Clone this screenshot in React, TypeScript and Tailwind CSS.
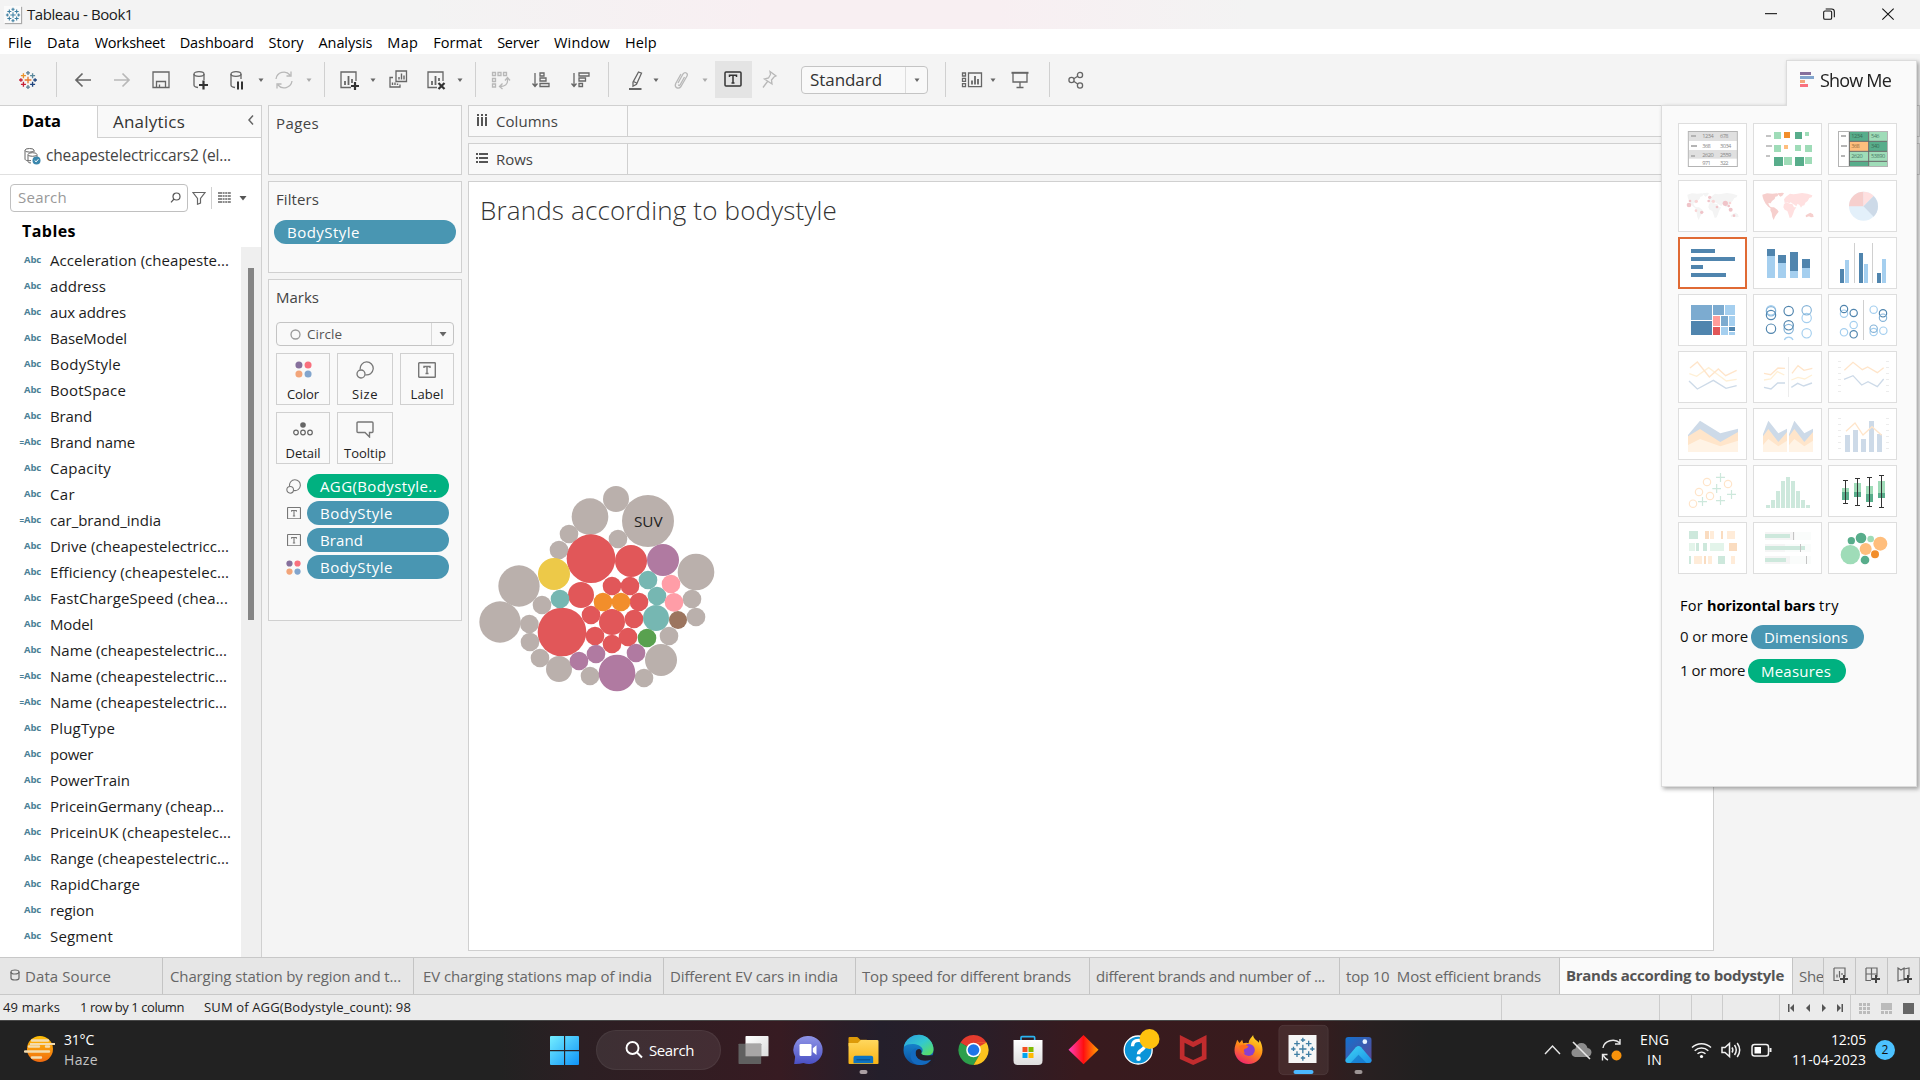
import { useLayoutEffect, useRef, useState } from "react";
import type { ReactNode } from "react";

/* Text run whose tracking is adjusted so that it spans exactly w pixels. */
function Fit({ w, children, className = "" }: { w: number; children: string; className?: string }) {
  const ref = useRef<HTMLSpanElement>(null);
  const [ls, setLs] = useState(0);
  useLayoutEffect(() => {
    if (ref.current) {
      const natural = ref.current.getBoundingClientRect().width;
      setLs((w + 1 - natural) / children.length);
    }
  }, []);
  return (
    <span ref={ref} className={`inline-block shrink-0 whitespace-pre ${className}`} style={{ letterSpacing: `${ls}px` }}>
      {children}
    </span>
  );
}

const PLUS = "M-1 0h2M0 -1v2";
function TableauMark({ size, colors }: { size: number; colors: string[] }) {
  const p: [number, number, number, number][] = [
    [12, 12, 4, 0], [12, 3.5, 2.4, 1], [12, 20.5, 2.4, 2], [3.5, 12, 2.2, 3], [20.5, 12, 2.2, 4],
    [6.5, 6.8, 3, 5], [17.5, 6.8, 3, 6], [6.5, 17.2, 3, 7], [17.5, 17.2, 3, 8],
  ];
  return (
    <svg width={size} height={size} viewBox="0 0 24 24">
      {p.map(([x, y, s, c], i) => (
        <path key={i} d={PLUS} transform={`translate(${x} ${y}) scale(${s})`} stroke={colors[c % colors.length]} strokeWidth={1.6 / s} fill="none" />
      ))}
    </svg>
  );
}
const BRAND = ["#e8762b", "#5c7f95", "#5c7f95", "#c72037", "#1f447e", "#eb9129", "#59879b", "#c72037", "#1f447e"];
const BLUE = ["#3b7ea1"];

function I({ className = "", light, children }: { className?: string; light?: boolean; children: ReactNode }) {
  return (
    <svg className={`shrink-0 ${className}`} width="24" height="24" viewBox="0 0 24 24" fill="none" stroke={light ? "#b8b8b8" : "#666"} strokeWidth="1.3">
      {children}
    </svg>
  );
}
function Caret({ className = "", light }: { className?: string; light?: boolean }) {
  return (
    <svg className={`shrink-0 ${className}`} width="8" height="8" viewBox="0 0 8 8">
      <path d="M1.5 2.5h5L4 6z" fill={light ? "#aaa" : "#666"} />
    </svg>
  );
}
function Sep({ className = "" }: { className?: string }) {
  return <div className={`h-[35px] w-px shrink-0 bg-[#d0d0d0] ${className}`} />;
}

function TitleBar() {
  return (
    <header className="flex h-[29px] shrink-0 items-center bg-[linear-gradient(90deg,#f3f3f3_22%,#f8eff2_40%,#f8eff2_52%,#f3f3f3_65%)] pl-1 text-[15px] text-[#1a1a1a]">
      <div className="flex h-[17px] w-[17px] items-center justify-center bg-[#fafafa] shadow-[1px_1px_1px_#aaa]">
        <TableauMark size={16} colors={BLUE} />
      </div>
      <Fit w={105} className="ml-[6px]">Tableau - Book1</Fit>
      <svg className="ml-auto" width="160" height="29" viewBox="0 0 480 87" fill="none" stroke="#111" strokeWidth="3.2">
        <path d="M15 41h36" />
        <rect x="191" y="33" width="24" height="25" rx="4" />
        <path d="M197 27h18q8 0 8 8v17" />
        <path d="M367 26l34 33M401 26l-34 33" />
      </svg>
    </header>
  );
}

const MENUS: [string, number][] = [
  ["File", 23], ["Data", 32], ["Worksheet", 69], ["Dashboard", 73], ["Story", 34], ["Analysis", 53],
  ["Map", 30], ["Format", 48], ["Server", 41], ["Window", 55], ["Help", 31],
];
function MenuBar() {
  return (
    <nav className="flex h-[25px] shrink-0 items-center gap-[14.900px] bg-white pl-2 pt-[2px] text-[14.500px] text-black">
      {MENUS.map(([m, w]) => <Fit key={m} w={w}>{m}</Fit>)}
    </nav>
  );
}

function Toolbar() {
  return (
    <div className="flex h-[51px] shrink-0 items-center bg-[#f4f4f4]">
      <div className="ml-[18px] mr-px"><TableauMark size={20} colors={BRAND} /></div>
      <Sep className="ml-[17px]" />
      <I className="ml-[14px]"><path d="M20 12H5M11.500 5.500L5 12l6.500 6.500" strokeWidth="1.700" /></I>
      <I light className="ml-[15px]"><path d="M4 12h15M12.500 5.500L19 12l-6.500 6.500" strokeWidth="1.700" /></I>
      <I className="ml-[15px]"><path d="M4 4h16v15.500H4zM7.500 19.500v-6h9v6M10.500 19.500v-3" /></I>
      <I className="ml-[15px]">
        <ellipse cx="11" cy="6" rx="5" ry="2.300" /><path d="M6 6v11q0 2 4 2.500M16 6v6" /><path d="M15.500 12.500v9M11 17h9" stroke="#333" strokeWidth="2.200" />
      </I>
      <I className="ml-[13px]">
        <ellipse cx="11" cy="6" rx="5" ry="2.300" /><path d="M6 6v11q0 2 4 2.500M16 6v5" /><path d="M13 13.500v8M17 13.500v8" stroke="#333" strokeWidth="2" />
      </I>
      <Caret className="ml-[8px]" />
      <I light className="ml-[7px]"><path d="M4 11a8 8 0 0 1 14-4M20 13a8 8 0 0 1-14 4M19 3.500v4.500h-4.500M5 20.500V16h4.500" /></I>
      <Caret light className="ml-[9px]" />
      <Sep className="ml-[11px]" />
      <I className="ml-[12px]">
        <path d="M14 19.500H4V4h15v9" /><path d="M8 17v-4M11.500 17V8M15 15v-4" strokeWidth="1.800" /><path d="M18 14v8M14 18h8" stroke="#333" strokeWidth="2.200" />
      </I>
      <Caret className="ml-[8px]" />
      <I className="ml-[9px]">
        <path d="M10 3h10.500v10.500H10zM7 9.500H4v9.500h10v-2.500" /><path d="M13 11.500V9M15.500 11.500V5.500M18 11.500V7.500M6.500 17v-2.500M9 17V14.500M11.500 17V15.500" strokeWidth="1.400" />
      </I>
      <I className="ml-[14px]">
        <path d="M13 19.500H4V4h15v9" /><path d="M8 17v-4M11.500 17V8M15 13v-3" strokeWidth="1.800" /><path d="M14.500 15l6 6M20.500 15l-6 6" stroke="#333" strokeWidth="2.200" />
      </I>
      <Caret className="ml-[8px]" />
      <Sep className="ml-[11px]" />
      <I light className="ml-[12px]">
        <path d="M4.500 4.500h3v3h-3zM10 4.500h3v3h-3zM15.500 4.500h3v3h-3zM4.500 10.500h3v3h-3zM4.500 16h3v3h-3zM19.500 10v3q0 5-7 5.500M17 12.500l2.500-3 2.500 3M14.500 15.500l-3 3 3 2.500" />
      </I>
      <I className="ml-[17px]"><path d="M6 5v13M3.500 15.500L6 18.500l2.500-3M11 5h4v3h-4zM11 10h6v3h-6zM11 15.500h9v3h-9z" /></I>
      <I className="ml-[15px]"><path d="M6 5v13M3.500 15.500L6 18.500l2.500-3M11 5h10v3H11zM11 10h6.500v3H11zM11 15.500h3.500v3H11z" /></I>
      <Sep className="ml-[16px]" />
      <I className="ml-[14px]"><path d="M15.500 4l3 1.200-5 11-3.500 2v-4zM10.500 13.500l3 1.500" /><path d="M6 21h12.500" strokeWidth="2" /></I>
      <Caret className="ml-[5px]" />
      <I light className="ml-[9px]"><path d="M9 15l5-9q1.500-2 3.300-1 1.700 1 .7 3l-6 10.500q-2 2.500-4.500 1.200-2-1.500-.8-4.200l5.300-9.500M9.500 16.500q0 1.700 1.500.5l4.500-8" /></I>
      <Caret light className="ml-[8px]" />
      <div className="ml-[6px] flex h-[37px] w-[37px] items-center justify-center bg-[#e4e4e4] pb-[2px] pr-px">
        <svg width="18" height="16" viewBox="0 0 18 16" fill="none" stroke="#333" strokeWidth="1.500">
          <rect x="1" y="1" width="16" height="14" rx="1" /><path d="M5.500 6V4.200h7V6M9 4.200V12M7.500 12h3" />
        </svg>
      </div>
      <I light className="ml-[5px]"><path d="M13 3.500l6 4.500-2 1-2.500 3 .5 4-7.500-5 4-1 2-3.500zM10.500 13.500L6 19.500" /></I>
      <div className="ml-[20px] flex h-[28px] w-[127px] items-stretch rounded-sm border border-[#c4c4c4] bg-[#f9f9f9] text-[17px] text-[#333]">
        <div className="flex flex-1 items-center pl-[8px]"><Fit w={71}>Standard</Fit></div>
        <div className="flex w-[22px] items-center justify-center border-l border-[#ddd]"><Caret /></div>
      </div>
      <Sep className="ml-[17px]" />
      <I className="ml-[14px]">
        <path d="M2.500 5h3v3h-3zM2.500 10.300h3v3h-3zM2.500 15.600h3v3h-3zM8.500 5h13v13.600h-13z" /><path d="M12 16.500v-4M15 16.500V8M18 16.500V11" strokeWidth="1.800" />
      </I>
      <Caret className="ml-[5px]" />
      <I className="ml-[11px]"><path d="M3.500 4.800h17" strokeWidth="2" /><path d="M5 5v9h14V5M12 14v5M8.500 19.500h7" /></I>
      <Sep className="ml-[17px]" />
      <I className="ml-[14px]"><circle cx="7.500" cy="12" r="2.600" /><circle cx="16" cy="7" r="2.600" /><circle cx="16" cy="17.500" r="2.600" /><path d="M9.700 10.700l4-2.400M9.700 13.300l4 2.700" /></I>
    </div>
  );
}

const FIELDS: [string, number, boolean?][] = [
  ["Acceleration (cheapeste...", 178], ["address", 55], ["aux addres", 75], ["BaseModel", 76], ["BodyStyle", 70],
  ["BootSpace", 75], ["Brand", 41], ["Brand name", 84, true], ["Capacity", 60], ["Car", 24],
  ["car_brand_india", 110, true], ["Drive (cheapestelectricc...", 178], ["Efficiency (cheapestelec...", 178],
  ["FastChargeSpeed (chea...", 177], ["Model", 42], ["Name (cheapestelectric...", 176], ["Name (cheapestelectric...", 176, true],
  ["Name (cheapestelectric...", 176, true], ["PlugType", 64], ["power", 42], ["PowerTrain", 79],
  ["PriceinGermany (cheap...", 173], ["PriceinUK (cheapestelec...", 180], ["Range (cheapestelectric...", 178],
  ["RapidCharge", 89], ["region", 43], ["Segment", 62],
];

function DataPane() {
  return (
    <aside className="flex w-[262px] shrink-0 flex-col border-r border-t border-[#d0d0d0] bg-white">
      <div className="flex h-[32px] shrink-0">
        <div className="flex w-[97px] items-center pb-px pl-[22px] text-[16.500px] font-bold text-black"><Fit w={38}>Data</Fit></div>
        <div className="flex flex-1 items-center border-b border-l border-[#d0d0d0] bg-[#f9f9f9] pl-[15px] text-[17px] text-[#333]">
          <Fit w={71}>Analytics</Fit>
          <svg className="mb-1 ml-auto mr-[6px]" width="8" height="12" viewBox="0 0 8 12" fill="none" stroke="#666" strokeWidth="1.500"><path d="M6 1.500L2 6l4 4.500" /></svg>
        </div>
      </div>
      <div className="flex h-[37px] shrink-0 items-center border-b border-[#e0e0e0] pl-[23px] text-[15.500px] text-[#444]">
        <svg width="18" height="18" viewBox="0 0 18 18" fill="none" stroke="#666">
          <path d="M8 13.500c-3 .5-6 0-6-1.500V3.500M11 3.500V5" /><ellipse cx="6.500" cy="3.300" rx="4.500" ry="1.800" /><path d="M5 8v6.500q0 1.500 3 1.500M14 8v2" /><ellipse cx="9.500" cy="7.500" rx="4.500" ry="1.800" />
          <circle cx="13.500" cy="13.500" r="4" fill="#3a87ad" stroke="none" /><path d="M11.700 13.500l1.400 1.400 2.300-2.700" stroke="#fff" />
        </svg>
        <Fit w={184} className="ml-[5px]">cheapestelectriccars2 (el...</Fit>
      </div>
      <div className="mt-[9px] flex h-[28px] shrink-0 items-center">
        <div className="ml-[10px] flex h-[28px] w-[178px] items-center justify-between rounded-sm border border-[#c0c0c0] pb-[2px] pl-[7px] pr-[6px] text-[15px] text-[#999]">
          <Fit w={48}>Search</Fit>
          <svg width="11" height="11" viewBox="0 0 11 11" fill="none" stroke="#555" strokeWidth="1.200"><circle cx="6.500" cy="4.500" r="3.500" /><path d="M4 7L1 10.300" /></svg>
        </div>
        <svg className="ml-[4px]" width="14" height="14" viewBox="0 0 14 14" fill="none" stroke="#666" strokeWidth="1.200"><path d="M1 1.500h12L8.500 7.500V12l-3 1.200V7.500z" /></svg>
        <div className="ml-[5px] h-[22px] w-px bg-[#d0d0d0]" />
        <svg className="mb-px ml-[6px]" width="13" height="11" viewBox="0 0 13 11" stroke="#666" strokeWidth="1.300"><path d="M0 1h13M0 4h13M0 7h13M0 10h13" strokeDasharray="4 .6 2 .6 2 .6 3 1" /></svg>
        <svg className="ml-[8px]" width="8" height="8" viewBox="0 0 8 8"><path d="M.5 2h7L4 6.500z" fill="#555" /></svg>
      </div>
      <div className="flex h-[35px] shrink-0 items-center pl-[22px] pt-[3px] text-[16px] font-bold text-black"><Fit w={53}>Tables</Fit></div>
      <div className="flex min-h-0 flex-1">
        <ul className="flex flex-1 flex-col">
          {FIELDS.map(([name, w, calc], i) => (
            <li key={i} className="flex h-[26px] shrink-0 items-center text-[15px] text-[#1c1c1c]">
              <span className="flex w-[50px] items-center justify-start text-[9.500px] font-bold text-[#4a7f96]">
                <span className="w-[24px] pt-px text-right text-[8px]">{calc ? "=" : ""}</span><Fit w={16}>Abc</Fit>
              </span>
              <Fit w={w}>{name}</Fit>
            </li>
          ))}
        </ul>
        <div className="flex w-[20px] shrink-0 justify-center bg-[#efefef] pr-px pt-[21px]"><div className="h-[352px] w-[6px] bg-[#858585]" /></div>
      </div>
    </aside>
  );
}

function ColorDots({ size }: { size: number }) {
  return (
    <svg width={size} height={size} viewBox="0 0 16 16">
      <circle cx="3.700" cy="3.700" r="3.300" fill="#86709c" /><circle cx="12.300" cy="3.700" r="3.300" fill="#f9707e" />
      <circle cx="3.700" cy="12.300" r="3.300" fill="#f2a57a" /><circle cx="12.300" cy="12.300" r="3.300" fill="#82a5cd" />
    </svg>
  );
}
function SizeIcon({ size }: { size: number }) {
  return (
    <svg width={size} height={size} viewBox="0 0 18 18" fill="none" stroke="#777" strokeWidth="1.300">
      <path d="M4.300 8.500a6.500 6.500 0 1 1 5 5.300" /><circle cx="5" cy="13" r="4" />
    </svg>
  );
}
function TextIcon({ size }: { size: number }) {
  return (
    <svg width={size} height={(size * 16) / 18} viewBox="0 0 18 16" fill="none" stroke="#777" strokeWidth="1.400">
      <rect x=".7" y=".7" width="16.600" height="14.600" rx=".6" /><path d="M6 6V4.500h6V6M9 4.500V11.500M7.500 11.500h3" />
    </svg>
  );
}
function MarkButton({ label, w, icon, wide }: { label: string; w: number; icon: ReactNode; wide?: boolean }) {
  return (
    <div className={`flex h-[52px] flex-col items-center border border-[#d0d0d0] text-[13px] text-[#222] ${wide ? "w-[56px]" : "w-[54px]"}`}>
      <div className="flex h-[31px] items-center">{icon}</div>
      <Fit w={w} className="leading-[18px]">{label}</Fit>
    </div>
  );
}
function Pill({ label, w, icon, green }: { label: string; w: number; icon: ReactNode; green?: boolean }) {
  return (
    <div className="flex h-[24px] items-center">
      <div className="flex w-[38px] justify-end pr-[6px]">{icon}</div>
      <div className={`flex h-[24px] w-[142px] items-center rounded-full pl-[13px] text-[15px] font-medium text-white ${green ? "bg-[#00b180]" : "bg-[#4996b2]"}`}>
        <Fit w={w}>{label}</Fit>
      </div>
    </div>
  );
}

function Cards() {
  return (
    <section className="ml-[6px] flex w-[194px] shrink-0 flex-col gap-[6px] text-[15px] text-[#444]">
      <div className="h-[70px] border border-[#d0d0d0] bg-[#f9f9f9] pl-[7px] pt-[7px] leading-[20px]"><Fit w={42}>Pages</Fit></div>
      <div className="h-[92px] border border-[#d0d0d0] bg-[#f9f9f9] pl-[5px] pt-[7px] leading-[20px]">
        <Fit w={42} className="ml-[2px]">Filters</Fit>
        <div className="mt-[11px] flex h-[24px] w-[182px] items-center rounded-full bg-[#4996b2] pl-[13px] font-medium text-white"><Fit w={72}>BodyStyle</Fit></div>
      </div>
      <div className="h-[342px] border border-[#d0d0d0] bg-[#f9f9f9] pl-[7px] pt-[7px] leading-[20px]">
        <Fit w={42}>Marks</Fit>
        <div className="mt-[15px] flex h-[24px] w-[178px] rounded-sm border border-[#c4c4c4] text-[13.500px] text-[#555]">
          <div className="flex flex-1 items-center gap-[6px] pl-[13px]">
            <svg width="11" height="11" viewBox="0 0 11 11" fill="none" stroke="#999" strokeWidth="1.300"><circle cx="5.500" cy="5.500" r="4.500" /></svg>
            <Fit w={34}>Circle</Fit>
          </div>
          <div className="flex w-[22px] items-center justify-center border-l border-[#d8d8d8]">
            <svg width="8" height="8" viewBox="0 0 8 8"><path d="M.5 2h7L4 6.500z" fill="#666" /></svg>
          </div>
        </div>
        <div className="mt-[7px] flex w-[178px] flex-wrap gap-[7px]">
          <MarkButton label="Color" w={31} icon={<ColorDots size={17} />} />
          <MarkButton wide label="Size" w={25} icon={<SizeIcon size={18} />} />
          <MarkButton label="Label" w={32} icon={<TextIcon size={18} />} />
          <MarkButton label="Detail" w={34} icon={
            <svg width="20" height="16" viewBox="0 0 20 16" fill="none" stroke="#666" strokeWidth="1.200"><circle cx="10" cy="4" r="2.800" fill="#666" stroke="none" /><circle cx="3" cy="11.500" r="2.300" /><circle cx="10" cy="11.500" r="2.300" /><circle cx="17" cy="11.500" r="2.300" /></svg>
          } />
          <MarkButton wide label="Tooltip" w={41} icon={
            <svg width="18" height="18" viewBox="0 0 18 18" fill="none" stroke="#777" strokeWidth="1.400"><path d="M2 2h14a1 1 0 0 1 1 1v8.500a1 1 0 0 1-1 1h-2.500V17l-4.500-4.500H2a1 1 0 0 1-1-1V3a1 1 0 0 1 1-1z" /></svg>
          } />
        </div>
        <div className="-ml-[7px] mt-[10px] flex flex-col gap-[3px]">
          <Pill green label="AGG(Bodystyle.." w={116} icon={<SizeIcon size={15} />} />
          <Pill label="BodyStyle" w={72} icon={<TextIcon size={14} />} />
          <Pill label="Brand" w={42} icon={<TextIcon size={14} />} />
          <Pill label="BodyStyle" w={72} icon={<ColorDots size={15} />} />
        </div>
      </div>
    </section>
  );
}

const BUBBLES: [string, [number, number, number][]][] = [
  ["#bab0ac", [[438, 87, 39], [360, 140, 55], [534, 153, 78], [297, 192, 28], [267, 240, 28], [444, 207, 28], [147, 348, 62], [90, 456, 62], [216, 405, 28], [178, 462, 28], [180, 516, 28], [210, 564, 28], [267, 597, 39], [360, 618, 28], [522, 624, 28], [573, 570, 48], [597, 498, 28], [678, 306, 55], [666, 387, 28], [678, 441, 28]]],
  ["#e15759", [[363, 266, 73], [483, 273, 48], [426, 348, 28], [480, 348, 28], [333, 375, 39], [507, 396, 28], [363, 435, 28], [426, 456, 39], [492, 447, 28], [276, 486, 73], [375, 498, 28], [474, 501, 28], [426, 522, 28]]],
  ["#edc948", [[252, 312, 48]]],
  ["#76b7b2", [[270, 387, 28], [534, 330, 28], [561, 378, 28], [558, 444, 39]]],
  ["#b07aa1", [[579, 270, 48], [327, 573, 28], [378, 552, 28], [498, 549, 28], [441, 609, 55]]],
  ["#f28e2b", [[399, 396, 28], [453, 396, 28]]],
  ["#ff9da7", [[603, 342, 28], [612, 397, 28]]],
  ["#9c755f", [[624, 450, 27]]],
  ["#59a14f", [[531, 504, 28]]],
];

function Shelf({ label, w, icon }: { label: string; w: number; icon: ReactNode }) {
  return (
    <div className="flex h-[32px] shrink-0 items-stretch border border-[#d0d0d0] bg-[#f9f9f9]">
      <div className="flex w-[159px] items-center border-r border-[#d0d0d0] pl-[7px] text-[15px] text-[#444]">
        {icon}
        <Fit w={w} className="ml-[8px]">{label}</Fit>
      </div>
    </div>
  );
}
function Workspace() {
  return (
    <main className="ml-[6px] flex min-w-0 flex-1 flex-col">
      <div className="flex flex-col gap-[6px]">
        <Shelf label="Columns" w={61} icon={
          <svg className="mb-0.5" width="12" height="12" viewBox="0 0 12 12" stroke="#555" strokeWidth="2"><path d="M2 0v12M6 0v12M10 0v12" strokeDasharray="2 1 20" /></svg>} />
        <Shelf label="Rows" w={36} icon={
          <svg className="mb-0.5" width="12" height="12" viewBox="0 0 12 12" stroke="#555" strokeWidth="2"><path d="M0 2h12M0 6h12M0 10h12" strokeDasharray="2 1 20" /></svg>} />
      </div>
      <div className="mt-[6px] flex h-[770px] w-[1246px] flex-col border border-[#d0d0d0] bg-white">
        <div className="ml-[11px] mt-[9px] h-[38px] text-[26px] font-light leading-[38px] text-[#333]"><Fit w={356}>Brands according to bodystyle</Fit></div>
        <svg className="ml-px mt-[241px] shrink-0" width="260" height="240" viewBox="0 0 780 720">
          {BUBBLES.map(([fill, list]) => list.map(([x, y, r]) => <circle key={`${x}-${y}`} cx={x} cy={y} r={r} fill={fill} />))}
          <text x="535" y="171" textAnchor="middle" fontSize="46" textLength="86" fill="#222">SUV</text>
        </svg>
      </div>
    </main>
  );
}

const LAND: string[] = [
  "M142 584l14-4 16 1 14-1 5 3-4 6-6 1-2 7-8 6-4 7-7-1 2 7 5 5 6 4-4 1-9-6-8-9-6-11-3-9z",
  "M188 580l14-2 5 2-5 7-6 3-5-5z",
  "M167 622l10 0 10 7 4 6-6 8-5 7-4 10-4-9-2-12-4-8z",
  "M207 598l6-8 7-5 5-4 10 2 12-2 14-2 16 2 15 5 -2 6-7 2-5 9-7 5-3 8-6 1-4 6-4-7-6-5-4 8-5-4-6-4-6-4-4 3-6-3-8 2z",
  "M207 612l8-5 9 4 8 1 5 10 7 0-6 9-3 9-5 12-6 2-4-13-3-8-8-4-4-7z",
  "M272 646l8-5 6-3 8 5 2 8-8 1-6-3-9 3z",
];
function Land({ dx, west, east }: { dx: number; west: string; east: string }) {
  return <g transform={`translate(${dx} 0)`}>{LAND.map((d, i) => <path key={i} d={d} fill={i < 3 || i === 5 ? west : east} />)}</g>;
}
const rects = (fill: string, list: [number, number, number, number][]) =>
  list.map(([x, y, w, h], i) => <rect key={`${fill}${i}`} x={x} y={y} width={w} height={h} fill={fill} />);
const rings = (stroke: string, r: number, list: [number, number][], k = "") =>
  list.map(([x, y], i) => <circle key={`${stroke}${k}${i}`} cx={x} cy={y} r={r} stroke={stroke} fill="none" strokeWidth="3.500" />);
const G1 = "#9fdcb8", G2 = "#58ad8b", B1 = "#a5cfef", B2 = "#5085ae", LP = "#ffe5ca", LB = "#cddae8", LY = "#fff0d6";
const num = (x: number, y: number, t: string, fill = "#888") => <text key={`${x}${y}`} x={x} y={y} fontSize="17" fill={fill} textLength={t.length * 8.5}>{t}</text>;

const THUMBS: { vb: string; body: ReactNode; on?: boolean }[] = [
  { vb: "114 369 207 156", body: <>
    <rect x="145" y="394" width="148" height="105" fill="#fff" />
    {rects("#e0e0e0", [[147, 396, 144, 27], [147, 450, 144, 26]])}
    <rect x="145" y="394.500" width="147" height="105" fill="none" stroke="#b4b4b4" strokeWidth="3" />
    {rects("#b4b4b4", [[153, 405, 15, 6], [153, 435, 18, 6], [153, 465, 12, 6]])}
    {num(187, 415, "1234")}{num(240, 415, "678")}{num(187, 443, "368")}{num(240, 443, "3034")}{num(187, 470, "2620")}{num(240, 470, "2559")}{num(187, 494, "971")}{num(240, 494, "322")}
  </> },
  { vb: "339 369 207 156", body: <>
    {rects("#c4c4c4", [[378, 405, 15, 6], [378, 435, 18, 6], [378, 465, 12, 6]])}
    {rects(G1, [[402, 396, 21, 21], [495, 396, 12, 12], [402, 435, 21, 21], [465, 435, 18, 18], [495, 435, 21, 21], [432, 471, 24, 24], [495, 471, 21, 21]])}
    {rects(G2, [[465, 396, 21, 21], [402, 471, 27, 27], [465, 471, 27, 27]])}
    {rects("#f28e2b", [[432, 396, 18, 18]])}{rects("#ffbe7d", [[432, 435, 12, 12]])}
  </> },
  { vb: "564 369 207 156", body: <>
    {rects(G2, [[628, 395, 57, 29], [686, 424, 57, 30], [628, 484, 57, 14]])}{rects(G1, [[686, 395, 57, 29], [628, 454, 57, 30], [686, 454, 57, 30], [686, 484, 57, 14]])}{rects("#ffbe7d", [[628, 424, 57, 30]])}
    <path d="M628 395v104M686 395v104M628 424h115M628 454h115M628 484h115" stroke="#666" strokeWidth="3" />
    <rect x="595.500" y="394.500" width="147" height="105" fill="none" stroke="#b4b4b4" strokeWidth="3" />
    {rects("#b4b4b4", [[603, 405, 15, 6], [603, 435, 18, 6], [603, 465, 12, 6]])}
    {num(634, 414, "1234", "#3b6b57")}{num(693, 414, "546", "#4b7b67")}{num(634, 445, "368", "#96703f")}{num(693, 445, "340", "#3b6b57")}{num(634, 475, "2620", "#4b7b67")}{num(693, 475, "53890", "#4b7b67")}
  </> },
  { vb: "114 540 207 156", body: <>
    <Land dx={0} west="#f4f4f4" east="#f4f4f4" />
    {([[147, 615, 7], [150, 603, 4], [169, 604, 5], [209, 592, 5], [206, 603, 4], [220, 604, 5], [256, 610, 8], [266, 618, 4], [270, 609, 4], [272, 629, 6], [231, 621, 4], [168, 632, 4], [185, 637, 5], [282, 647, 4]] as [number, number, number][]).map(([x, y, r], i) => <circle key={i} cx={x} cy={y} r={r} fill={i % 3 === 2 ? "#f9d5d5" : "#f0c4c9"} />)}
  </> },
  { vb: "339 540 207 156", body: <Land dx={225} west="#f6cfcd" east="#ffe0e0" /> },
  { vb: "564 540 207 156", body: <>
    <circle cx="670.500" cy="619" r="43.500" fill="#e3f0fa" />
    <path d="M670.500 619V575.500A43.500 43.500 0 0 0 627 619z" fill="#f6cfcd" /><path d="M670.500 619V575.500A43.500 43.500 0 0 1 701 588z" fill="#ffe0e0" /><path d="M670.500 619L701 588A43.500 43.500 0 0 1 701 650z" fill="#cddae8" />
  </> },
  { vb: "114 711 207 156", on: true, body: rects(B2, [[153, 747, 72, 12], [153, 771, 132, 12], [153, 795, 36, 12], [153, 819, 105, 12]]) },
  { vb: "339 711 207 156", body: <>
    {rects(B1, [[381, 768, 24, 66], [414, 789, 24, 45], [450, 813, 24, 21], [486, 804, 24, 30]])}
    {rects(B2, [[381, 747, 24, 21], [414, 765, 24, 24], [450, 756, 24, 57], [486, 777, 24, 27]])}
  </> },
  { vb: "564 711 207 156", body: <>
    {rects(B2, [[600, 807, 12, 42], [657, 759, 12, 90], [711, 819, 12, 30]])}{rects(B1, [[615, 780, 12, 69], [672, 792, 12, 57], [726, 777, 12, 72]])}{rects("#d0d0d0", [[642, 729, 3, 120], [696, 729, 3, 120]])}
  </> },
  { vb: "114 882 207 156", body: <>
    {rects("#7cabd0", [[153, 915, 63, 45], [219, 915, 33, 30], [243, 948, 21, 30]])}{rects(B2, [[153, 963, 63, 42], [267, 981, 18, 12]])}
    {rects(B1, [[255, 915, 30, 30], [267, 948, 18, 30], [243, 981, 21, 24], [267, 996, 18, 9]])}{rects("#ff9d9a", [[219, 948, 21, 30]])}{rects("#e15759", [[219, 981, 21, 24]])}
  </> },
  { vb: "339 882 207 156", body: <>
    {rings(B1, 14, [[393, 931], [500, 954], [500, 1000]])}<path d="M433 1020a14 14 0 0 1 26 0" stroke={B1} strokeWidth="3.500" fill="none" />{rings("#86b4d8", 14, [[500, 931], [446, 987], [393, 934]])}{rings(B2, 14, [[393, 945], [393, 986], [446, 933], [446, 976]])}
  </> },
  { vb: "564 882 207 156", body: <>
    {rings(B1, 11, [[612, 941], [641, 975], [612, 997], [701, 929], [730, 992], [701, 996]])}{rings(B2, 11, [[612, 927], [641, 939], [641, 1003], [729, 940]])}{rings("#86b4d8", 11, [[729, 953], [701, 986]])}
    {rects("#d0d0d0", [[669, 900, 3, 120]])}
  </> },
  { vb: "84 63 207 156", body: <g fill="none" strokeWidth="4">
    <path d="M118 131l22 8 36-26 26 20 27 20 31-5" stroke={LY} /><path d="M120 114l22-18 36 45 27-24 22 20 33-16" stroke={LP} /><path d="M117 153l25 24 48-26 38 24 32-8" stroke={LB} />
  </g> },
  { vb: "309 63 207 156", body: <g fill="none" strokeWidth="4">
    <path d="M342 150l20-3 20-22 21 10M424 150l20-8 20 5 22-12" stroke={LY} /><path d="M342 130l20 4 22-20 21 1M426 130l18-23 18 14 25-6" stroke={LP} /><path d="M342 172l21 5 20-18h22M424 172l19-12 18 8 25-9" stroke={LB} /><path d="M415.500 81v120" stroke="#ececec" strokeWidth="3" />
  </g> },
  { vb: "534 63 207 156", body: <g fill="none" strokeWidth="4">
    <path d="M583 121l26-24 28 22 16-8 29 17 19-15" stroke={LP} /><path d="M582 148l27-11 26 28 19-10 28 15 19-23" stroke={LB} />
    <path d="M568.500 93v94M712.500 93v94" stroke="#ececec" strokeWidth="9" strokeDasharray="3 15" />
  </g> },
  { vb: "84 234 207 156", body: <><path d="M114 315l36-43 61 38 53-14v70H114z" fill={LB} /><path d="M114 319l36-22 61 39 53-30v60H114z" fill={LP} /><path d="M114 345l36-18 61 22 53-17v34H114z" fill="#fff3e5" /></> },
  { vb: "309 234 207 156", body: <>{[0, 78].map((d) => <g key={d} transform={`translate(${d} 0)`}><path d="M339 313l16-41 30 38 26-14v70h-72z" fill={LB} /><path d="M339 319l16-22 30 39 26-30v60h-72z" fill={LP} /><path d="M339 345l16-18 30 22 26-17v34h-72z" fill="#fff3e5" /></g>)}</> },
  { vb: "534 234 207 156", body: <>
    {rects(LB, [[585, 315, 15, 51], [609, 300, 15, 66], [633, 327, 15, 39], [657, 273, 15, 93], [681, 312, 15, 54]])}
    <path d="M588 304l27-25 24 36 27-25 29 26" stroke={LP} strokeWidth="4" fill="none" /><path d="M568.500 264v94M712.500 264v94" stroke="#ececec" strokeWidth="9" strokeDasharray="3 15" />
  </> },
  { vb: "84 405 207 156", body: <>{rings(LP, 11, [[171, 456], [147, 486], [180, 498], [129, 521], [234, 462]])}<path d="M198 442h27M211.500 429v27M187 476h26M200 462v27M144 515h27M157.500 501v27M198 512h27M211.500 498v27M231 493h27M244.500 480v27" stroke="#cde8dc" strokeWidth="3.500" /></> },
  { vb: "309 405 207 156", body: rects("#cde8dc", [[348, 525, 12, 9], [363, 510, 12, 24], [378, 483, 12, 51], [393, 453, 12, 81], [408, 441, 12, 93], [423, 453, 12, 81], [438, 483, 12, 51], [453, 510, 12, 24], [468, 525, 12, 9]]) },
  { vb: "534 405 207 156", body: <>
    {rects(G1, [[576, 474, 21, 12], [612, 459, 21, 27], [648, 468, 21, 24], [684, 453, 21, 36]])}{rects(G2, [[576, 486, 21, 24], [612, 486, 21, 15], [648, 492, 21, 24], [684, 489, 21, 15]])}
    <path d="M586.500 451v69M579 451.500h15M579 520.500h15M622.500 445v81M615 445.500h15M615 526.500h15M658.500 442v87M651 442.500h15M651 529.500h15M694.500 436v96M687 436.500h15M687 532.500h15" stroke="#333" strokeWidth="3" />
  </> },
  { vb: "84 576 207 156", body: <>
    {rects("#cde8dc", [[117, 603, 27, 24], [138, 639, 9, 24], [159, 639, 12, 24], [117, 678, 6, 24], [204, 678, 21, 24]])}{rects("#fadcc0", [[165, 603, 12, 24], [213, 603, 6, 24], [237, 639, 24, 24], [162, 678, 6, 24]])}
    {rects("#ffecd9", [[180, 603, 12, 24], [231, 603, 24, 24], [132, 678, 24, 24], [174, 678, 12, 24], [243, 678, 12, 24]])}{rects("#e3f4ea", [[117, 639, 18, 24], [180, 639, 42, 24]])}
  </> },
  { vb: "309 576 207 156", body: <>
    {rects("#fafcfb", [[345, 606, 138, 24], [345, 642, 138, 24], [345, 678, 138, 24]])}{rects("#f5f5f5", [[345, 606, 90, 24], [345, 642, 60, 24], [345, 678, 75, 24]])}
    {rects("#cde8dc", [[345, 612, 75, 12], [345, 648, 120, 12], [345, 684, 63, 12]])}{rects("#c4c4c4", [[429, 606, 3, 24], [450, 642, 3, 24], [468, 678, 3, 24]])}
  </> },
  { vb: "534 576 207 156", body: <>{([[601, 674, 29, G1], [604, 632, 11, G2], [633, 624, 16, G2], [662, 627, 10, G1], [691, 641, 21, "#ffbe7d"], [647, 657, 18, "#ffbe7d"], [675, 673, 12, "#f28e2b"], [645, 690, 13, G2]] as [number, number, number, string][]).map(([x, y, r, f], i) => <circle key={i} cx={x} cy={y} r={r} fill={f} />)}</> },
];

function ShowMe() {
  return (
    <aside className="absolute right-[3px] top-[60px] flex w-[256px] flex-col drop-shadow-[2px_2px_2px_rgba(0,0,0,0.35)]">
      <div className="relative z-10 -mb-px ml-auto flex h-[46px] w-[131px] items-center border-l border-t border-r border-[#dcdcdc] bg-[#fafafa] pb-[7px] pl-[13px] text-[18px] text-[#222]">
        <svg width="14" height="16" viewBox="0 0 42 48">{rects("#86709c", [[0, 0, 33, 9]])}{rects("#82a5cd", [[0, 12, 42, 9]])}{rects("#f2a57a", [[0, 24, 15, 9]])}{rects("#f9707e", [[0, 36, 24, 9]])}</svg>
        <Fit w={70} className="ml-[6px]">Show Me</Fit>
      </div>
      <div className="h-[682px] border border-[#dcdcdc] bg-[#fafafa] pl-[16px] pt-[17px]">
        <div className="grid w-[219px] grid-cols-3 gap-x-[6px] gap-y-[5px]">
          {THUMBS.map(({ vb, body, on }) => (
            <div key={vb + (on ? "on" : "")} className={`h-[52px] w-[69px] overflow-hidden bg-white ${on ? "outline-2 -outline-offset-2 outline-[#e06a34]" : "outline-1 -outline-offset-1 outline-[#dedede]"}`}>
              <svg width="69" height="52" viewBox={vb}>{body}</svg>
            </div>
          ))}
        </div>
        <div className="ml-[2px] mt-[20px] flex h-[24px] items-center gap-[4px] text-[14.500px] text-black">
          <Fit w={22}>For</Fit><Fit w={107} className="font-bold">horizontal bars</Fit><Fit w={19}>try</Fit>
        </div>
        <div className="ml-[2px] mt-[7px] flex h-[24px] items-center text-[15px] text-[#111]">
          <Fit w={67} className="-mt-px">0 or more</Fit>
          <div className="ml-[3px] flex h-[24px] w-[113px] items-center rounded-full bg-[#4996b2] pl-[13px] font-medium text-white"><Fit w={83}>Dimensions</Fit></div>
        </div>
        <div className="ml-[2px] mt-[10px] flex h-[24px] items-center text-[15px] text-[#111]">
          <Fit w={64} className="-mt-px">1 or more</Fit>
          <div className="ml-[3px] flex h-[24px] w-[98px] items-center rounded-full bg-[#00b180] pl-[13px] font-medium text-white"><Fit w={69}>Measures</Fit></div>
        </div>
      </div>
    </aside>
  );
}

function SheetTabs() {
  const cell = "flex shrink-0 items-center border-r border-[#c4c4c4]";
  return (
    <div className="flex h-[38px] shrink-0 border-b border-t border-[#c8c8c8] bg-[#e6e6e6] text-[15px] text-[#666]">
      <div className={`${cell} w-[163px] pl-[10px]`}>
        <svg className="mb-0.5 mr-[5px]" width="10" height="12" viewBox="0 0 10 12" fill="none" stroke="#666" strokeWidth="1.200"><ellipse cx="5" cy="3" rx="4" ry="2" /><path d="M1 3v6q0 2 4 2t4-2V3" /></svg>
        <Fit w={85}>Data Source</Fit>
      </div>
      <div className={`${cell} w-[251px] pl-[7px]`}><Fit w={230}>Charging station by region and t...</Fit></div>
      <div className={`${cell} w-[250px] pl-[9px]`}><Fit w={228}>EV charging stations map of india</Fit></div>
      <div className={`${cell} w-[192px] pl-[6px]`}><Fit w={167}>Different EV cars in india</Fit></div>
      <div className={`${cell} w-[234px] pl-[6px]`}><Fit w={208}>Top speed for different brands</Fit></div>
      <div className={`${cell} w-[250px] pl-[6px]`}><Fit w={228}>different brands and number of ...</Fit></div>
      <div className={`${cell} w-[220px] pl-[6px]`}><Fit w={194}>top 10  Most efficient brands</Fit></div>
      <div className={`${cell} w-[233px] bg-[#fafafa] pb-[2px] pl-[6px] font-bold text-[#555]`}><Fit w={217}>Brands according to bodystyle</Fit></div>
      <div className={`${cell} w-[31px] overflow-hidden pl-[6px]`}><Fit w={24}>She</Fit></div>
      {["M4 3h11v9M9 15.500H4V3M7 12.500V9.500M9.500 12.500V6M12 10V8", "M4 3h11v9M9 15.500H4V3M9.500 3v12M4 9h11", "M4 3l3 2 3-2v12l-3 0-3 1zM10 4l5-1v9"].map((d) => (
        <div key={d} className={`${cell} w-[32px] justify-center pb-[2px]`}>
          <svg width="20" height="20" viewBox="0 0 20 20" fill="none" stroke="#666" strokeWidth="1.200"><path d={d} /><path d="M14 10v8M10 14h8" stroke="#444" strokeWidth="2" /></svg>
        </div>
      ))}
    </div>
  );
}

function StatusBar() {
  return (
    <div className="flex h-[25px] shrink-0 items-stretch bg-[#ebebeb] text-[13px] text-[#222]">
      <div className="flex flex-1 items-center gap-[20px] pl-[3px]"><Fit w={56}>49 marks</Fit><Fit w={103}>1 row by 1 column</Fit><Fit w={206}>SUM of AGG(Bodystyle_count): 98</Fit></div>
      <div className="w-[158px] border-l border-[#ccc]" /><div className="w-[32px] border-l border-[#ccc]" /><div className="w-[31px] border-l border-[#ccc]" /><div className="w-[57px] border-l border-[#ccc]" />
      <div className="flex w-[71px] items-center border-l border-[#ccc]">
        <svg width="70" height="12" viewBox="0 0 70 12" fill="#555"><path d="M8 2h1.500v8H8zM14 2v8l-4-4zM30 2v8l-4-4zM42 2v8l4-4zM57 2v8l4-4zM61.500 2H63v8h-1.500z" /></svg>
      </div>
      <div className="flex w-[70px] items-center border-l border-[#ccc] pl-[8px]">
        <svg width="60" height="12" viewBox="0 0 60 12">{rects("#bbb", [[0, 1, 3, 3], [4, 1, 3, 3], [8, 1, 3, 3], [0, 5, 3, 3], [4, 5, 3, 3], [8, 5, 3, 3], [0, 9, 3, 3], [4, 9, 3, 3], [8, 9, 3, 3], [22, 1, 11, 7], [22, 9, 3, 3], [26, 9, 3, 3], [30, 9, 3, 3]])}{rects("#666", [[44, 1, 11, 11]])}</svg>
      </div>
    </div>
  );
}

function TaskIcon({ vb, children }: { vb: string; children: ReactNode }) {
  return <svg className="shrink-0" width="55" height="60" viewBox={vb}>{children}</svg>;
}
function Grad({ id, a, b, c, v }: { id: string; a: string; b: string; c?: string; v?: boolean }) {
  return <linearGradient id={id} x1="0" y1="0" x2={v ? "0" : "1"} y2="1"><stop offset="0" stopColor={a} />{c && <stop offset=".5" stopColor={c} />}<stop offset="1" stopColor={b} /></linearGradient>;
}

function Taskbar() {
  return (
    <footer className="flex h-[60px] shrink-0 items-center bg-[linear-gradient(90deg,#222222_0px,#222222_500px,#2c1f23_580px,#371b22_780px,#241f2b_880px,#2a1e28_980px,#381a1e_1080px,#381b1d_1300px,#282021_1370px,#202020_1430px)] text-white shadow-[inset_0_1px_0_#484848]">
      <svg className="ml-[24px] shrink-0" width="32" height="30" viewBox="0 0 32 30">
        <defs><Grad v id="sun" a="#ffc107" b="#f06a10" /></defs>
        <circle cx="16" cy="14" r="13" fill="url(#sun)" />
        <path d="M8 5.500h16M5 11.500h10M22 11.500h3M1 16.500h24M8 22.500h9" stroke="#f3dcae" strokeWidth="2.400" strokeLinecap="round" /><path d="M6 9h25" stroke="#f3dcae" strokeWidth="2" />
      </svg>
      <div className="ml-[8px] flex w-[473px] flex-col items-start text-[14px] leading-[20px]"><Fit w={29}>31°C</Fit><Fit w={33} className="text-[#c4c4c4]">Haze</Fit></div>
      <TaskIcon vb="-9 0 165 180">
        <defs><linearGradient id="win" gradientUnits="userSpaceOnUse" x1="30" y1="48" x2="117" y2="135"><stop stopColor="#74eeff" /><stop offset="1" stopColor="#0f93f8" /></linearGradient></defs>
        <path d="M33 48H72V90H30V51q0-3 3-3zM75.500 48H114q3 0 3 3V90H75.500zM30 93.500H72V135H33q-3 0-3-3zM75.500 93.500H117V132q0 3-3 3H75.500z" fill="url(#win)" />
      </TaskIcon>
      <div className="ml-[4px] flex h-[40px] w-[125px] shrink-0 items-center rounded-full border border-white/5 bg-white/8 pl-[28px] text-[15px]">
        <svg width="18" height="18" viewBox="0 0 18 18" fill="none" stroke="#fff" strokeWidth="1.900"><circle cx="7.500" cy="7" r="6" /><path d="M12 11.500l5 5" /></svg>
        <Fit w={44} className="ml-[6px]">Search</Fit>
      </div>
      <div className="ml-[4.500px] flex">
        <TaskIcon vb="556.5 0 165 180">
          <defs><Grad id="tv" a="#fff" b="#ddd" /></defs>
          <rect x="615" y="48" width="69" height="61" rx="2" fill="url(#tv)" /><rect x="594" y="71" width="68" height="61" rx="2" fill="#606060" /><rect x="615" y="71" width="47" height="38" fill="#a8a6a6" />
        </TaskIcon>
        <TaskIcon vb="721.5 0 165 180">
          <defs><Grad v id="chat" a="#8f94e6" b="#4a50c4" /></defs>
          <path d="M803 48a42 42 0 1 1-14 81q-14 4-28 3l3-22A42 42 0 0 1 803 48z" fill="url(#chat)" /><rect x="777" y="72" width="36" height="36" rx="4" fill="#fff" /><path d="M817 85l11-9v29l-11-9z" fill="#fff" />
        </TaskIcon>
        <TaskIcon vb="886.5 0 165 180">
          <defs><Grad v id="fold" a="#ffd75e" b="#f9b414" /></defs>
          <path d="M924 54q0-3 3-3h22q3 0 5 3l5 5h20v20h-55z" fill="#dd9a08" /><path d="M924 69h28l9-9h49q4 0 4 4v66q0 2-3 2H927q-3 0-3-3z" fill="url(#fold)" />
          <path d="M939 130v-17q0-6 6-6h47q6 0 6 6v17z" fill="#0c73c2" /><path d="M948 119.500h41" stroke="#0a4b87" strokeWidth="3" /><rect x="957" y="150" width="24" height="12" rx="6" fill="#aba0a4" />
        </TaskIcon>
        <TaskIcon vb="1051.5 0 165 180">
          <defs><Grad id="eg1" a="#2c9ce0" b="#63e24b" c="#33c8cf" /><Grad v id="eg2" a="#1b96dd" b="#0b4f9e" /></defs>
          <circle cx="1134" cy="90" r="45" fill="url(#eg2)" />
          <path d="M1090 80A45 45 0 0 1 1179 88c0 16-12 19-24 19-8 0-14-2-13-7 4-3 5-8 4-13-6-14-37-21-56-7z" fill="url(#eg1)" />
          <path d="M1142 100c2 6 14 8 29 6l12 0-8 30-8 0 5-15c-24 8-47-2-47-22 0-7 5-12 12-12q9 4 5 13z" fill="#241f2b" />
          <path d="M1125 99c0 20 22 28 47 20-9 13-23 17-36 16-20-2-30-21-24-37 3-8 9-13 17-14-3 4-4 9-4 15z" fill="#136abf" />
        </TaskIcon>
        <TaskIcon vb="1216.5 0 165 180">
          <path d="M1299 90L1260 67.500A45 45 0 0 1 1338 67.500z" fill="#e33b2e" /><path d="M1260 67.500A45 45 0 0 0 1299 135l20-33-20-12z" fill="#2c9f4b" /><path d="M1338 67.500A45 45 0 0 1 1299 135L1319 101 1310 67.500z" fill="#fcc31e" /><path d="M1260 67.500h78l-39 22z" fill="#e33b2e" />
          <circle cx="1299" cy="90" r="22" fill="#fff" /><circle cx="1299" cy="90" r="17.500" fill="#1f74e8" />
        </TaskIcon>
        <TaskIcon vb="1381.5 0 165 180">
          <defs><Grad v id="bag" a="#fff" b="#dedede" /></defs>
          <path d="M1441.500 68V53q0-3 3-3h35q3 0 3 3v15" fill="none" stroke="#2ab4f0" strokeWidth="5" /><path d="M1419 60h87v62q0 13-13 13h-61q-13 0-13-13z" fill="url(#bag)" />
          {rects("#f25022", [[1446, 81, 15, 15]])}{rects("#7fba00", [[1464, 81, 15, 15]])}{rects("#00a4ef", [[1446, 99, 15, 15]])}{rects("#ffb900", [[1464, 99, 15, 15]])}
        </TaskIcon>
        <TaskIcon vb="106.5 0 165 180">
          <defs><linearGradient id="dia"><stop stopColor="#ff3fc0" /><stop offset=".5" stopColor="#ff1010" /><stop offset="1" stopColor="#ffa400" /></linearGradient></defs>
          <path d="M189 45l45 44-45 44-45-44z" fill="url(#dia)" />
        </TaskIcon>
        <TaskIcon vb="271.5 0 165 180">
          <circle cx="353" cy="90" r="42" fill="#0b94d8" stroke="#fff" strokeWidth="4" /><path d="M336 79q0-18 18-18 19 0 19 15 0 8-10 14-9 5-9 13" fill="none" stroke="#fff" strokeWidth="10" /><circle cx="354" cy="116" r="7" fill="#fff" /><circle cx="387" cy="57" r="30" fill="#ffc20e" />
        </TaskIcon>
        <TaskIcon vb="436.5 0 165 180"><path d="M478 45l40 20 40-20v72l-40 18-40-18zM492 68v40l26 12 26-12V68l-26 14z" fillRule="evenodd" fill="#c12c2e" /></TaskIcon>
        <TaskIcon vb="601.5 0 165 180">
          <defs><linearGradient id="ff" x1=".8" y1="0" x2=".3" y2="1"><stop stopColor="#ffe226" /><stop offset=".5" stopColor="#ff8a16" /><stop offset="1" stopColor="#f0246e" /></linearGradient></defs>
          <path d="M642 90c0-13 5-20 8-31l7 10 8-10 3 11q10-3 16 0c1-11 8-17 14-25 0 12 12 16 17 23l2-9c5 9 9 19 9 31a42 42 0 0 1-84 0z" fill="url(#ff)" /><circle cx="685" cy="90" r="18" fill="#8a3fd0" /><path d="M656 78q12-10 28 1-2 6-12 8-5 6 2 12-16 0-18-21z" fill="#ff6a1c" />
        </TaskIcon>
        <TaskIcon vb="766.5 0 165 180">
          <rect x="775" y="16" width="148" height="148" rx="14" fill="#fff" fillOpacity=".07" stroke="#fff" strokeOpacity=".08" strokeWidth="3" /><rect x="804" y="45" width="84" height="84" fill="#f6f6f6" />
          <path d="M836 87h22M847 74v26M841 60h13M847 53v13M841 114h13M847 108v14M812 87h13M819 80v13M869 87h13M875.500 80v13M821 71h17M829.500 62v17M856 71h17M864.500 62v17M821 103h17M829.500 94v17M856 103h17M864.500 94v17" stroke="#3f7ea4" strokeWidth="4" />
          <rect x="819" y="150" width="60" height="12" rx="6" fill="#4cb8ff" />
        </TaskIcon>
        <TaskIcon vb="931.5 0 165 180">
          <defs><Grad id="ph" a="#1372cf" b="#5e4694" /><Grad id="mt" a="#3fd6f5" b="#1a8fe6" /><clipPath id="phc"><rect x="975" y="51" width="78" height="78" rx="8" /></clipPath></defs>
          <rect x="975" y="51" width="78" height="78" rx="8" fill="url(#ph)" /><path clipPath="url(#phc)" d="M972 122l34-40q8-8 16 0l34 40v10h-84z" fill="url(#mt)" /><path d="M990 129l24-25 24 25z" fill="#0f62c0" fillOpacity=".55" /><circle cx="1033" cy="65" r="7" fill="#e8f4ff" /><rect x="1002" y="150" width="24" height="12" rx="6" fill="#9c9494" />
        </TaskIcon>
      </div>
      <div className="ml-auto flex items-center pr-[25px]">
        <svg width="88" height="30" viewBox="0 0 88 30" fill="none" stroke="#e8e8e8" strokeWidth="1.400">
          <path d="M5 19l7.500-8 7.500 8" />
          <path d="M35 22q-4-1-3.500-5 .5-3 4-3.500 1-5.500 6-5.500 4.500 0 6 5 4 .5 4 4.500-.5 4-4.500 4.500z" fill="#8d8d8d" stroke="none" /><path d="M33 7l17 17" strokeWidth="1.600" />
          <path d="M63 13a10 9 0 0 1 17-5M80 4v5h-5M63 19a10 9 0 0 0 5 6M62.500 25.500v-6h5" /><circle cx="76.500" cy="20.500" r="5" fill="#f7920b" stroke="none" />
        </svg>
        <div className="ml-[12px] flex flex-col items-center text-[14px] leading-[20px]"><Fit w={28}>ENG</Fit><Fit w={14}>IN</Fit></div>
        <svg className="ml-[20px]" width="84" height="24" viewBox="0 0 84 24" fill="none" stroke="#f0f0f0" strokeWidth="1.500">
          <path d="M3 9.500a14 14 0 0 1 19 0M5.700 12.700a10 10 0 0 1 13.600 0M8.500 15.800a6 6 0 0 1 8 0" /><circle cx="12.500" cy="18.500" r="1.600" fill="#fff" stroke="none" />
          <path d="M33 9.500h3l4.500-4v13l-4.500-4h-3zM43 9.500q1.700 2.500 0 5M45.500 7q3.500 5 0 10M48.200 5q5 7 0 14" />
          <rect x="63" y="6.500" width="16.500" height="11.500" rx="2.500" /><path d="M81.500 10v4" strokeWidth="2" /><rect x="65.500" y="9" width="6.500" height="6.500" fill="#fff" stroke="none" />
        </svg>
        <div className="ml-[19px] flex flex-col items-end text-[14px] leading-[20px]"><Fit w={34}>12:05</Fit><Fit w={73}>11-04-2023</Fit></div>
        <div className="ml-[9px] flex h-[20px] w-[20px] items-center justify-center rounded-full bg-[#4cc2ff] text-[12px] text-[#111]">2</div>
      </div>
    </footer>
  );
}

export default function App() {
  return (
    <div className="relative flex h-[1080px] w-[1920px] flex-col overflow-hidden bg-[#f4f4f4] font-['Open_Sans','Noto_Sans',sans-serif]">
      <TitleBar />
      <MenuBar />
      <Toolbar />
      <div className="flex h-[852px] shrink-0">
        <DataPane />
        <Cards />
        <Workspace />
      </div>
      <SheetTabs />
      <StatusBar />
      <Taskbar />
      <ShowMe />
    </div>
  );
}
